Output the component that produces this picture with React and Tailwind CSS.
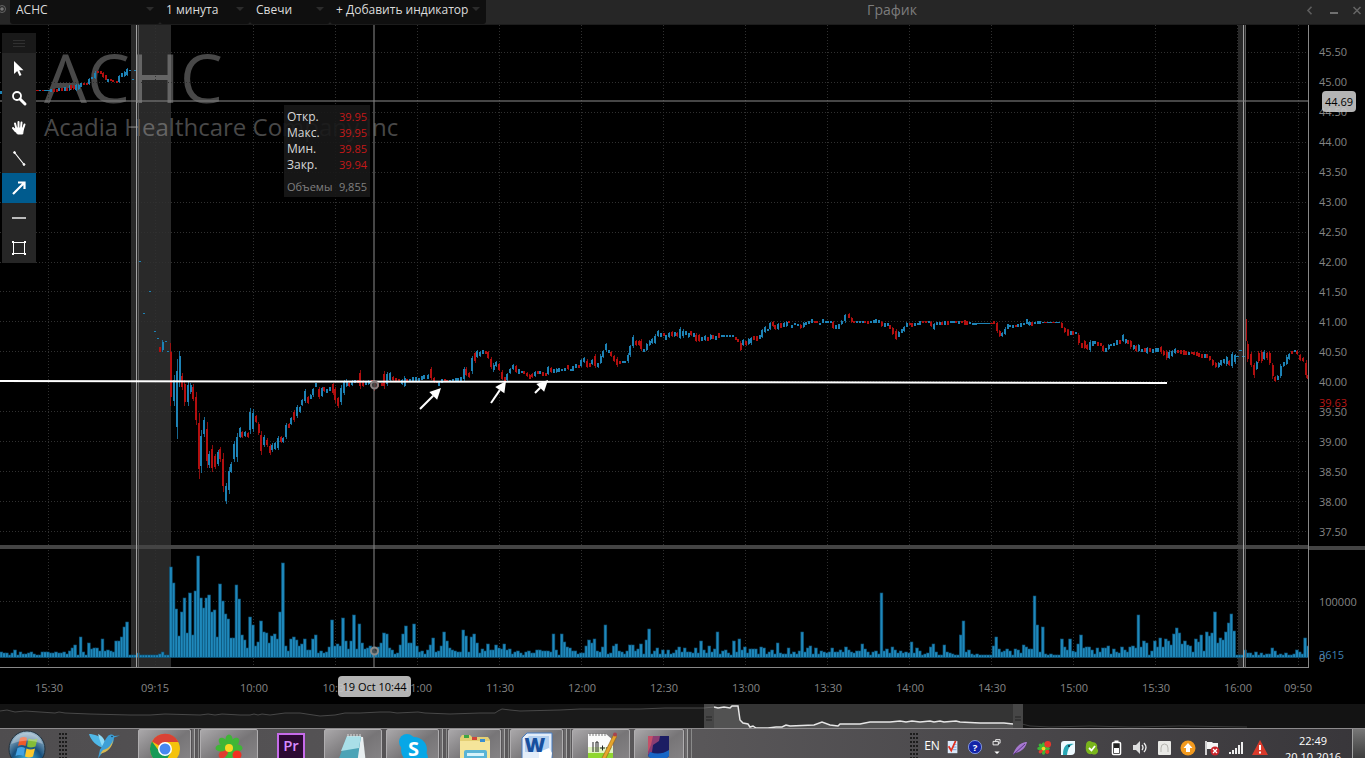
import { useState } from 'react';

const UP = '#1d82b5';
const DOWN = '#b30f0f';

// Each candle is "x high low" plus r (falling) or b (rising), in the units of its own session
const SESSIONS = [
    {
        id: 'premarket', x: 0, y: 0, k: 1 / 3,
        candles: '3 272 282 b;112 269 272 r;120 269 272 b;129 269 272 r;137 269 272 b;145 269 272 b;153 268 275 b;161 268 276 r;170 266 275 r;178 264 274 b;186 263 273 r;194 262 272 b;202 264 274 r;209 256 274 b;214 254 270 r;221 255 270 r;228 252 272 b;236 252 270 b;244 250 262 b;252 250 256 r;260 250 256 r;267 233 254 b;276 230 236 b;286 214 238 b;295 212 218 r;302 214 222 r;310 215 235 r;318 226 240 r;324 236 246 b;332 236 242 r;340 240 247 r;350 242 248 r;357 226 248 b;365 218 232 b;374 212 232 b;382 204 228 b;390 210 213 b;406 210 213 b;399 236 240 b;418 782 786 b;450 872 876 b'
    },
    {
        id: 'open', x: 120, y: 300, k: 1 / 3,
        candles: '72 38 42 b;105 92 96 b;114 113 117 b;138 123 127 b;144 153 156 b;119 141 155 r;128 120 155 b;152 128 318 r;163 225 318 b;172 177 416 b;179 152 260 b;186 219 270 r;194 240 318 r;204 245 318 b;212 250 282 b;219 253 303 r;229 276 375 r;237 339 537 r;243 390 518 b;253 350 410 b;261 365 503 r;267 453 503 b;277 435 516 r;286 462 507 r;295 450 498 b;301 441 485 r;309 458 576 r;319 549 612 b;327 500 582 b;333 487 520 b;342 423 487 b;351 399 485 b;360 380 415 b;367 392 413 r;376 392 410 b;385 395 415 r;391 325 403 b;400 327 397 b;408 345 370 r;416 365 405 r;424 393 465 r;433 405 440 b;441 415 440 r;451 432 465 r;457 430 455 b;466 425 450 b;475 408 450 b;484 408 430 r;490 412 430 b;498 369 417 b;507 369 385 r;513 350 375 b;522 330 365 r;531 316 355 b;540 317 340 b;547 298 318 b;555 267 310 b;564 288 311 r;572 282 298 b;579 264 290 b;588 248 262 b;597 260 297 r;607 260 292 b;613 260 275 r;622 268 278 b;631 262 273 b;639 248 284 r;645 260 308 r;654 290 323 r;663 255 315 b;672 240 285 b;680 238 262 b;688 245 262 r;697 240 258 b;705 240 250 b;713 240 250 r;721 210 266 r;730 240 260 r;738 244 254 b;746 240 255 b;755 240 250 r;764 240 272 r;775 250 262 r;787 248 258 r;793 213 266 r;802 216 258 b;811 216 245 b;820 228 243 r;829 235 243 r;838 238 247 r;846 236 255 b;854 228 262 b;862 237 246 r;871 236 246 b;879 231 243 b;887 232 243 b;896 233 244 b;905 228 240 b;911 225 238 b;924 222 238 b;934 201 240 r;943 232 250 r;951 245 250 r;957 244 258 b;965 238 248 b;974 238 245 r'
    },
    {
        id: 'morning', x: 430, y: 300, k: 1 / 3,
        candles: '44 237 246 r;52 240 245 r;60 240 246 b;69 238 246 b;77 234 246 b;85 234 244 b;93 232 242 b;102 200 244 b;109 202 228 r;118 215 234 r;127 167 222 b;135 155 188 r;142 150 175 b;151 152 170 b;159 150 162 b;168 152 162 r;175 153 178 r;183 170 208 r;191 190 215 b;199 183 200 b;208 190 212 r;216 210 240 r;224 230 242 r;231 220 242 b;240 205 222 b;249 193 210 b;258 194 220 r;266 208 222 b;275 213 219 b;283 212 221 r;291 215 232 r;299 222 238 r;307 218 235 r;315 212 230 b;323 214 222 r;331 213 223 b;339 216 228 r;347 220 228 r;354 198 226 b;363 200 218 r;371 208 218 b;380 203 220 b;388 205 217 b;397 206 213 b;405 203 213 b;415 194 210 r;422 206 213 b;430 198 212 b;438 192 204 b;446 195 203 r;454 177 200 b;463 172 190 b;471 178 204 r;479 188 202 r;487 176 194 b;495 162 203 r;504 188 204 b;512 162 192 b;520 150 175 b;529 128 155 b;537 150 158 b;544 153 172 r;552 165 185 r;561 172 200 r;569 183 192 r;578 183 188 b;586 182 188 b;594 160 188 b;601 134 170 b;610 105 143 b;618 120 138 r;627 120 138 r;634 116 153 r;642 148 155 b;650 128 153 b;659 120 138 b;667 113 132 b;676 103 132 b;685 90 110 b;693 98 110 b;701 98 108 r;709 106 120 b;717 97 115 b;726 94 112 r;734 95 110 b;742 95 112 r;750 82 118 b;759 88 113 b;768 94 104 b;776 98 114 b;784 92 108 r;792 98 112 b;799 100 126 r;808 103 126 r;817 112 123 b;825 106 122 b;833 110 124 r;842 103 120 b;850 106 118 r;858 108 120 b;867 100 114 r;875 104 112 b;883 105 112 b;892 106 112 b;900 106 112 b;908 106 112 b;917 110 120 r;925 117 126 r;932 123 153 r;940 118 138 b;948 122 138 r;956 114 135 b;964 110 134 b;973 107 120 r;981 108 122 r;989 104 118 b;997 86 115 b;1006 78 98 b;1013 86 94 b;1021 65 90 b;1029 63 82 r;1036 74 90 r;1045 70 90 b;1053 70 83 r;1062 66 82 b;1070 64 80 b;1078 64 70 r;1087 74 83 b;1096 70 76 b;1104 71 77 b;1112 72 87 r;1121 66 84 b;1129 66 74 b;1137 63 72 b;1146 57 68 b;1154 62 68 r;1162 63 68 r;1170 68 76 b;1178 57 70 b;1187 63 70 b;1195 62 70 b;1204 62 68 b;1210 62 88 r;1218 76 88 b;1226 72 86 b'
    },
    {
        id: 'afternoon', x: 840, y: 300, k: 0.3348,
        candles: '5 60 75 b;15 42 68 b;27 38 55 r;35 50 68 r;43 62 70 r;52 62 70 b;60 64 70 b;68 62 70 b;76 64 70 r;84 63 72 r;93 62 70 b;101 60 70 b;109 58 68 b;117 61 68 b;125 63 82 r;133 70 80 b;142 68 78 b;150 74 86 r;158 80 105 r;168 88 120 r;176 94 112 b;184 88 98 b;192 78 96 b;200 65 82 b;208 68 76 r;216 70 82 r;224 68 78 b;232 68 76 b;240 63 74 b;249 62 68 r;257 63 68 r;265 62 68 b;273 62 80 r;282 68 90 b;290 66 76 b;298 66 74 b;306 66 76 r;315 64 74 b;323 62 74 r;331 63 70 b;339 62 70 b;347 62 70 r;355 64 72 b;363 62 70 r;372 60 74 r;380 62 74 r;388 66 72 b;396 68 74 b;404 70 74 b;412 69 73 b;420 69 73 b;428 69 73 b;436 69 73 b;444 69 73 b;452 68 72 r;460 64 72 r;469 65 98 r;477 90 112 r;485 95 110 b;493 82 104 b;501 73 86 b;509 76 82 b;517 76 84 b;525 74 82 r;533 73 80 b;542 68 80 b;550 68 76 b;558 58 72 b;566 62 78 b;574 66 78 r;582 65 72 b;590 64 72 b;598 64 72 b;606 65 70 b;614 66 70 r;622 66 70 b;630 66 70 b;638 66 70 r;646 66 70 b;654 65 70 b;663 66 85 r;672 80 98 r;681 88 108 r;689 92 106 b;697 92 106 r;705 96 102 b;713 98 134 r;722 128 142 r;731 120 146 r;739 130 150 r;747 120 154 b;755 122 136 b;763 122 132 b;771 125 136 r;779 128 138 r;786 133 154 r;794 144 154 b;802 132 148 b;810 130 138 b;818 128 138 b;827 120 134 b;836 120 130 r;846 102 126 b;854 115 130 b;861 118 130 r;869 120 145 r;877 133 150 b;885 133 155 r;893 132 156 b;902 146 156 b;910 144 156 r;918 140 162 b;927 144 154 r;935 146 158 b;943 142 154 b;951 142 156 b;959 138 160 r;967 148 168 r;976 150 178 r;984 150 176 b;992 150 170 b;1002 144 162 b;1010 148 158 r;1018 150 162 r;1026 150 164 r;1034 153 163 r;1042 155 163 b;1050 156 162 r;1058 155 163 r;1065 156 166 r;1073 158 170 r;1081 160 172 r;1089 160 172 b;1097 160 174 r;1105 166 182 r;1114 175 196 r;1123 186 204 r;1131 185 202 b;1139 178 196 b;1147 175 190 b;1155 166 196 b;1163 180 198 r;1171 155 204 b;1180 160 190 b;1188 168 171 b;1196 150 153 b;1205 168 171 b;1212 42 135 r;1218 122 185 r;1228 156 200 r;1237 188 232 r;1245 182 210 b;1251 153 188 r;1259 150 188 r;1267 150 180 b;1276 155 178 r;1284 152 195 r;1292 188 235 r;1300 228 245 r;1308 224 240 b;1317 192 232 b;1326 184 200 b;1335 165 195 b;1342 158 180 b;1349 152 160 r;1358 150 156 b;1366 150 165 r;1375 160 182 r;1384 170 186 r;1392 180 232 r;1398 222 240 r'
    }
];

const VOLUME = [
    5, 4, 4, 2, 4, 7, 2, 5, 3, 3, 4, 5, 3, 2, 2, 5, 5, 5, 4, 4, 5, 4, 4, 5, 3, 6, 9, 12, 2, 20,
    5, 2, 14, 8, 9, 9, 6, 18, 6, 7, 6, 5, 16, 16, 20, 30, 35, 2, 2, 2, 4, 2, 2, 2, 2, 2, 2, 2, 3, 5,
    2, 2, 90, 74, 48, 21, 45, 59, 24, 64, 22, 66, 101, 59, 49, 59, 62, 45, 47, 20, 73, 56, 43, 38, 19, 19, 72, 58, 22, 17,
    9, 40, 32, 11, 15, 36, 25, 24, 14, 21, 23, 18, 45, 94, 11, 6, 18, 20, 17, 11, 13, 18, 7, 7, 18, 22, 4, 6, 4, 5,
    10, 37, 11, 13, 11, 39, 16, 8, 16, 42, 8, 33, 14, 8, 9, 11, 10, 6, 10, 14, 24, 23, 9, 7, 3, 4, 12, 23, 31, 14,
    14, 33, 11, 5, 6, 3, 7, 12, 19, 5, 6, 11, 25, 16, 9, 7, 6, 5, 5, 27, 21, 5, 20, 23, 14, 4, 8, 6, 13, 7,
    7, 12, 9, 8, 13, 7, 8, 3, 5, 6, 4, 2, 5, 6, 4, 4, 7, 7, 6, 6, 6, 5, 23, 7, 2, 23, 15, 10, 9, 6,
    6, 3, 4, 4, 11, 17, 14, 18, 6, 5, 10, 32, 3, 4, 11, 13, 6, 5, 3, 6, 12, 12, 6, 8, 13, 3, 17, 28, 3, 6,
    9, 3, 7, 3, 7, 3, 4, 7, 10, 5, 9, 5, 5, 4, 9, 4, 16, 7, 4, 11, 5, 8, 25, 3, 6, 7, 4, 2, 16, 5,
    18, 7, 10, 4, 8, 8, 8, 3, 10, 9, 3, 5, 7, 3, 14, 4, 3, 3, 9, 3, 5, 3, 6, 25, 5, 9, 11, 3, 9, 3,
    6, 5, 4, 5, 9, 5, 5, 7, 5, 10, 7, 5, 4, 6, 6, 13, 8, 5, 2, 5, 6, 3, 64, 6, 8, 4, 10, 7, 4, 6,
    4, 5, 4, 15, 4, 9, 6, 2, 3, 4, 10, 13, 5, 2, 2, 12, 5, 4, 3, 2, 2, 22, 36, 5, 7, 3, 2, 3, 2, 2,
    2, 2, 2, 11, 20, 8, 5, 6, 8, 6, 2, 8, 7, 4, 12, 10, 8, 8, 61, 32, 5, 30, 3, 2, 3, 2, 2, 2, 18, 10,
    7, 18, 6, 5, 13, 22, 9, 10, 10, 7, 3, 9, 5, 9, 9, 11, 3, 8, 5, 4, 10, 7, 5, 10, 11, 9, 42, 10, 16, 14,
    2, 6, 16, 10, 19, 10, 18, 16, 12, 23, 29, 24, 13, 16, 12, 11, 5, 18, 15, 22, 6, 25, 21, 24, 45, 14, 19, 17, 25, 34,
    43, 26, 2, 2, 2, 7, 4, 4, 2, 5, 2, 4, 2, 3, 3, 9, 6, 2, 3, 2, 4, 2, 2, 3, 7, 5, 3, 19, 11
];
const BAR_STEP = 2.7333;

const PRICES = ['45.50', '45.00', '44.50', '44.00', '43.50', '43.00', '42.50', '42.00', '41.50', '41.00', '40.50', '40.00', '39.50', '39.00', '38.50', '38.00', '37.50'];
const TIMES = ['15:30', '09:15', '10:00', '10:30', '11:00', '11:30', '12:00', '12:30', '13:00', '13:30', '14:00', '14:30', '15:00', '15:30', '16:00', '09:50'];
const GRID_X = [48.5, 155.5, 253.5, 335.5, 417.5, 499.5, 581.5, 663.5, 745.5, 827.5, 909.5, 991.5, 1073.5, 1155.5, 1237.5, 1298.5];

function Candles({ session }) {
    return (
        <g transform={`translate(${session.x} ${session.y}) scale(${session.k})`} shapeRendering="crispEdges">
            {session.candles.split(';').map((row) => {
                const [x, hi, lo, dir] = row.split(' ');
                const size = lo - hi;
                const inset = size > 14 ? size * 0.15 : 0;
                const half = size < 5 ? 4 : 3;
                return (
                    <g key={row} fill={dir === 'b' ? UP : DOWN}>
                        <rect x={x - 1.5} y={hi} width={3} height={size} opacity={0.8} />
                        <rect x={x - half} y={Number(hi) + inset} width={half * 2} height={size - inset * 2} />
                    </g>
                );
            })}
        </g>
    );
}

function Arrow({ x1, y1, x2, y2 }) {
    const a = Math.atan2(y2 - y1, x2 - x1);
    const bx = x2 - 11 * Math.cos(a);
    const by = y2 - 11 * Math.sin(a);
    const dx = 5.5 * Math.sin(a);
    const dy = -5.5 * Math.cos(a);
    return (
        <g fill="#fff" stroke="#fff">
            <line x1={x1} y1={y1} x2={bx} y2={by} strokeWidth={2} />
            <path d={`M${x2} ${y2}L${bx + dx} ${by + dy}L${bx - dx} ${by - dy}Z`} stroke="none" />
        </g>
    );
}

function ChartCanvas() {
    return (
        <svg className="relative block w-full h-full" viewBox="0 25 1308 642" preserveAspectRatio="none" role="img" aria-label="ACHC">
            {/* closed market hours */}
            <rect x="131" y="25" width="40" height="642" fill="#fff" opacity="0.16" />
            <rect x="1238" y="25" width="8" height="642" fill="#fff" opacity="0.16" />

            <g stroke="#303030" strokeWidth="1" strokeDasharray="1 2">
                {GRID_X.map((x) => <line key={x} x1={x} y1="25" x2={x} y2="667" />)}
                {PRICES.map((p, i) => {
                    const y = Math.round(52 + i * 29.93) + 0.5;
                    return <line key={p} x1="0" y1={y} x2="1308" y2={y} />;
                })}
                <line x1="0" y1="601.5" x2="1308" y2="601.5" />
            </g>

            {SESSIONS.map((s) => <Candles key={s.id} session={s} />)}

            <g fill="#1f88bb" stroke="#0d5378" strokeWidth="0.6">
                {VOLUME.map((h, i) => (
                    <rect key={i} x={i * BAR_STEP} y={657 - h} width={BAR_STEP} height={h + 0.5} />
                ))}
            </g>

            <rect x="0" y="545" width="1308" height="4" fill="#444" />
            <rect x="136" y="25" width="1" height="642" fill="#a3a3a3" />
            <rect x="138" y="25" width="1" height="642" fill="#5c5c5c" />
            <rect x="1243" y="25" width="1" height="642" fill="#a3a3a3" />
            <rect x="1245" y="25" width="1" height="642" fill="#5c5c5c" />

            {/* crosshair */}
            <rect x="0" y="100" width="1308" height="2" fill="#808080" opacity="0.55" />
            <rect x="373" y="25" width="2" height="642" fill="#808080" opacity="0.55" />

            <line x1="0" y1="381" x2="1167" y2="383" stroke="#fff" strokeWidth="2" />
            <Arrow x1={420} y1={409} x2={441} y2={388} />
            <Arrow x1={491} y1={403} x2={506} y2={381} />
            <Arrow x1={535} y1={393} x2={548} y2={380} />
            <circle cx="374.5" cy="385" r="3.5" fill="#444" fillOpacity="0.8" stroke="#8a8080" strokeWidth="2" />
            <circle cx="374.5" cy="651" r="3.5" fill="#444" fillOpacity="0.8" stroke="#8a8a8a" strokeWidth="2" />
        </svg>
    );
}

function MenuSelect({ label, value, className }) {
    return (
        <div className={`relative h-6 rounded-b-[3px] bg-[#0f0f0f] ${className}`}>
            <select aria-label={label} defaultValue={value} className="block w-full h-5 appearance-none bg-transparent pl-[6px] text-[12px] leading-5 font-medium text-[#dcdcdc] outline-none">
                <option value={value}>{value}</option>
            </select>
            <svg className="absolute right-[6px] top-[7px] w-2 h-1 pointer-events-none" viewBox="0 0 8 4"><path d="M0 0h8L4 4z" fill="#2c2c2c" /></svg>
        </div>
    );
}

function Header() {
    return (
        <header className="flex h-[25px] shrink-0 items-start bg-[#262626] border-b border-[#1c1c1c]">
            <svg className="w-[10px] h-5 shrink-0" viewBox="0 0 10 20">
                <circle cx="2" cy="9" r="3.5" fill="none" stroke="#666" />
                <circle cx="2" cy="9" r="1.8" fill="#777" />
            </svg>
            <div className="flex">
                <MenuSelect label="Тикер" value="ACHC" className="w-[150px]" />
                <MenuSelect label="Интервал" value="1 минута" className="w-[90px]" />
                <MenuSelect label="Тип" value="Свечи" className="w-[80px]" />
                <MenuSelect label="Индикатор" value="+ Добавить индикатор" className="w-[156px]" />
            </div>
            <h1 className="flex-1 text-center text-[14px] leading-5 text-[#7d7d7d]">График</h1>
            <div className="flex w-[67px] h-5 items-center justify-between pl-[8px] pr-[4px]">
                <button aria-label="Назад"><svg className="w-2 h-[9px]" viewBox="0 0 8 9" fill="none" stroke="#5e5e5e" strokeWidth="1.6"><path d="M5.5 .8L2 4.5l3.500 3.700" /></svg></button>
                <button aria-label="Свернуть"><svg className="w-2 h-[9px]" viewBox="0 0 8 9"><rect y="6" width="8" height="2" fill="#707070" /></svg></button>
                <button aria-label="Закрыть"><svg className="w-2 h-[9px]" viewBox="0 0 8 9" fill="none" stroke="#666" strokeWidth="1.500"><path d="M.5 1l7 7M7.500 1l-7 7" /></svg></button>
            </div>
        </header>
    );
}

const TOOLS = [
    { id: 'Курсор', icon: <path d="M4 2v13l3.200-3 2.300 5 2-1-2.300-4.700h4.300z" fill="#fff" /> },
    { id: 'Лупа', icon: <g fill="none" stroke="#fff"><circle cx="7" cy="7" r="4" strokeWidth="1.800" /><path d="M10 10l5 5" strokeWidth="3" strokeLinecap="round" /></g> },
    { id: 'Рука', icon: <g stroke="#fff" strokeWidth="2" strokeLinecap="round"><path d="M6.500 10L5 4.500M8.500 9V3M11 9l.5-5.500M13 10l1.500-4.500M5.500 12L3 9" fill="none" /><path d="M5.500 9h8l-.8 6H7.500L5 12z" fill="#fff" strokeWidth="1" /></g> },
    { id: 'Отрезок', icon: <g stroke="#fff" fill="#fff"><path d="M4.500 3.500l9.500 12" strokeWidth="1.200" /><circle cx="4.500" cy="3.500" r=".9" /><circle cx="14" cy="15.500" r=".9" /></g> },
    { id: 'Стрелка', icon: <path d="M3 15L14 4M8 3.500h6.500V10" fill="none" stroke="#fff" strokeWidth="2.200" /> },
    { id: 'Горизонталь', icon: <path d="M2 9h14" stroke="#bbb" strokeWidth="2" /> },
    { id: 'Прямоугольник', icon: <g fill="#fff"><path d="M3.500 3.500h11v11h-11z" fill="none" stroke="#fff" /><path d="M2 2h2v2H2zM14 2h2v2h-2zM2 14h2v2H2zM14 14h2v2h-2z" /></g> }
];

function Toolbar() {
    const [active, setActive] = useState('Стрелка');

    return (
        <div className="absolute left-[2px] top-2 w-[34px] bg-[#262626]">
            <div className="flex h-5 flex-col items-center justify-center gap-[2px] bg-[#191919]">
                <span className="w-3 h-px bg-[#303030]" />
                <span className="w-3 h-px bg-[#303030]" />
                <span className="w-3 h-px bg-[#303030]" />
            </div>
            {TOOLS.map((tool) => (
                <button
                    key={tool.id}
                    aria-label={tool.id}
                    onClick={() => setActive(tool.id)}
                    className={`flex w-full h-[30px] items-center justify-center ${active === tool.id ? 'bg-[#005b8e]' : ''}`}
                >
                    <svg className="w-[18px] h-[18px]" viewBox="0 0 18 18">{tool.icon}</svg>
                </button>
            ))}
        </div>
    );
}

const QUOTE = [['Откр.', '39.95'], ['Макс.', '39.95'], ['Мин.', '39.85'], ['Закр.', '39.94']];

function QuoteBox() {
    return (
        <table className="absolute left-[284px] top-20 w-[86px] bg-[#181818]/90 text-[12px] leading-4">
            <tbody>
                <tr className="h-1"><td colSpan="2" /></tr>
                {QUOTE.map(([name, value]) => (
                    <tr key={name}>
                        <th scope="row" className="p-0 pl-[3px] text-left font-normal text-[#d8d8d8]">{name}</th>
                        <td className="p-0 pr-[3px] text-right text-[11px] font-medium text-[#c41818]">{value}</td>
                    </tr>
                ))}
                <tr className="text-[#808080]">
                    <th scope="row" className="p-0 pl-[3px] pt-[6px] pb-[2px] text-left text-[11px] font-normal">Объемы</th>
                    <td className="p-0 pr-[3px] pt-[6px] pb-[2px] text-right text-[11px]">9,855</td>
                </tr>
            </tbody>
        </table>
    );
}

function PriceAxis() {
    return (
        <div className="relative flex w-[57px] shrink-0 flex-col border-l border-[#888] text-[11px] leading-4 text-[#858585]">
            <div className="flex flex-1 flex-col justify-between pt-[19px] pb-[6px] pl-[10px]">
                {PRICES.map((p) => <span key={p}>{p}</span>)}
            </div>
            <div className="h-1 bg-[#444]" />
            <div className="flex h-[118px] flex-col justify-between pt-[44px] pb-[2px] pl-[10px]">
                <span>100000</span>
                <span>0</span>
            </div>
            <span className="absolute left-[13px] top-[66px] h-[21px] rounded-sm bg-[#c8c8c8]/90 px-[3px] leading-[22px] text-black">44.69</span>
            <span className="absolute left-[10px] top-[370px] text-[#b81616]">39.63</span>
            <span className="absolute left-[10px] bottom-[5px] text-[#3f82b5]">3615</span>
        </div>
    );
}

function TimeAxis() {
    return (
        <div className="relative grid h-[36px] shrink-0 grid-cols-[98fr_114fr_84fr_81fr_repeat(11,82fr)_38fr_48fr] items-center pt-1 text-center text-[11px] leading-4 text-[#858585]">
            {TIMES.map((t, i) => <span key={i}>{t}</span>)}
            <span className="absolute left-[338px] top-2 h-[21px] w-[73px] rounded-sm bg-[#c8c8c8]/90 leading-[21px] text-black">19 Oct 10:44</span>
        </div>
    );
}

const NAV_LEFT = '0,7 7,6 15,8 25,7 55,9 59,8 65,9 90,10 130,11 150,11 165,10 200,11 208,10 215,11 222,10 240,11 250,11 254,10 258,11 262,10 270,11 285,9 300,9 320,12 335,11 345,9 360,9 380,8 390,8 397,9 418,8 425,9 450,10 480,9 495,9 498,7 502,5 510,6 520,7 560,6 580,5 640,5 665,4 680,4 704,4';
const NAV_VIEW = '714,3 718,4 724,3 730,4 732,2 738,2 740,16 743,19 748,20 750,23 753,22 756,24 768,24 776,23 782,23 786,21 790,22 814,21 822,18 830,21 838,22 840,20 860,20 870,18 890,18 900,17 906,18 912,17 920,18 930,17 934,18 940,17 944,18 956,17 960,18 980,19 1004,19 1013,20';

function Navigator() {
    return (
        <svg className="block w-full h-6 shrink-0" viewBox="0 0 1365 24" preserveAspectRatio="none" aria-hidden="true">
            <rect width="1365" height="24" fill="#131313" />
            <polygon points={`0,24 ${NAV_LEFT} 704,24`} fill="#1a1a1a" />
            <polyline points={NAV_LEFT} fill="none" stroke="#484848" />
            <rect x="704" width="319" height="24" fill="#343434" />
            <polygon points={`714,24 ${NAV_VIEW} 1013,24`} fill="#525252" />
            <polyline points={NAV_VIEW} fill="none" stroke="#e6e6e6" strokeWidth="1.500" />
            <polyline points="704,4 714,3" stroke="#777" />
            <polyline points="1013,20 1022,20 1030,22 1050,23 1090,22 1130,23 1180,22 1247,23" fill="none" stroke="#3c3c3c" />
            <rect x="704" width="10" height="24" fill="#555" opacity="0.55" />
            <rect x="1013" width="10" height="24" fill="#555" opacity="0.55" />
            <path d="M706 13h6M706 16h6M1015 13h6M1015 16h6" stroke="#222" />
        </svg>
    );
}

function Hummingbird() {
    return (
        <g>
            <path d="M1 3c5 0 12 2 16 8l-2 6C9 15 3 10 1 3z" fill="#4fb8e8" />
            <path d="M10 3c4 2 7 5 7 10l-3 2C12 10 11 7 10 3z" fill="#8fdcf8" />
            <path d="M20 5c2-2 5-2 6 0l6-.5-6 2c0 7-5 11-10 13l-6 8 2-9c3-3 4-9 8-13.500z" fill="#3d9fd6" />
            <path d="M25 8c-1 6-5 10-10 11l-3 4c8-2 13-7 13-15z" fill="#d7b850" />
            <circle cx="24" cy="5.500" r=".7" fill="#123" />
        </g>
    );
}

function Flower() {
    return (
        <g>
            {[0, 45, 90, 135, 180, 225, 270, 315].map((a) => (
                <ellipse key={a} cx="16" cy="8" rx="3.600" ry="5.500" fill={a === 225 ? '#e03c30' : '#3fb636'} transform={`rotate(${a} 16 16)`} />
            ))}
            <circle cx="16" cy="16" r="4" fill="#f8d822" />
            <circle cx="24" cy="23" r="4.500" fill="#f22f22" />
        </g>
    );
}

const APPS = [
    { name: 'Hummingbird', box: 'w-[66px]', icon: <Hummingbird /> },
    {
        name: 'Chrome', box: 'w-[53px]', glass: true, stack: true,
        icon: (
            <g>
                <circle cx="16" cy="17" r="15" fill="#f4c20d" />
                <path d="M16 17L3 9.500A15 15 0 0 1 29.500 10H16z" fill="#d94235" />
                <path d="M3 9.500A15 15 0 0 0 15 32l7-12-6-3-6 2z" fill="#179a56" />
                <circle cx="16" cy="17" r="7" fill="#fff" />
                <circle cx="16" cy="17" r="5.500" fill="#4688f1" />
            </g>
        )
    },
    { name: 'ICQ', box: 'w-[58px]', glass: true, icon: <Flower /> },
    {
        name: 'Premiere', box: 'w-[64px]',
        icon: <g><rect x="2" y="2" width="28" height="28" fill="#c66bea" /><rect x="4" y="4" width="24" height="24" fill="#2c0a33" /><text x="16" y="20" textAnchor="middle" fontSize="15" fontWeight="600" fill="#d68aff">Pr</text></g>
    },
    {
        name: 'Notepad', box: 'w-[58px] mr-[3px]', glass: true,
        icon: <g><path d="M12 4l14 1 3 27H6z" fill="#e8eef0" /><path d="M10 4h14l-4 28H0z" fill="#4ba3b6" /><path d="M10 4h14l-2 12-18 3z" fill="#a9dfe8" /><path d="M11 2v3M14 2v3M17 2v3M20 2v3M23 2v3" stroke="#ddd" /></g>
    },
    {
        name: 'Skype', box: 'w-[53px]', glass: true, stack: true,
        icon: <g fill="#07a7e6"><circle cx="17" cy="18" r="13" /><circle cx="10" cy="10" r="8" /><circle cx="23" cy="26" r="8" /><text x="16.500" y="24" textAnchor="middle" fontSize="20" fontWeight="700" fill="#fff">S</text></g>
    },
    {
        name: 'Explorer', box: 'w-[53px]', glass: true, stack: true,
        icon: <g><path d="M1 6l2-3h8l2 2h16l2 3v24H1z" fill="#e4cf74" /><path d="M1 9h30v23H1z" fill="#f5e59a" /><path d="M5 3h5v3H5z" fill="#3fa544" /><path d="M13 5h5v3h-5z" fill="#d0463a" /><path d="M21 7h5v3h-5z" fill="#3b8ed0" /><rect x="5" y="18" width="23" height="14" rx="2" fill="#5ab4d6" /><path d="M8 21h17v3H8z" fill="#d6f2fa" /></g>
    },
    {
        name: 'Word', box: 'w-[53px]', glass: true, stack: true,
        icon: <g><path d="M6 1h25v31H1V6z" fill="#e3edf9" stroke="#477cc2" /><path d="M8 4h20v16H4V8z" fill="#b4d0f0" /><path d="M18 20l10-4 3 5-2 11H18z" fill="#fff" /><text x="14" y="20" textAnchor="middle" fontSize="20" fontWeight="800" fill="#174f9e">W</text></g>
    },
    {
        name: 'Notepad++', box: 'w-[58px] mr-[3px]', glass: true,
        icon: <g><path d="M3 2h18l7 6v24H3z" fill="#fafafa" /><path d="M3 21h25v11H3z" fill="#8ed62f" /><path d="M3 15h25v6H3z" fill="#dff3c0" /><path d="M5 1v3M8 1v3M11 1v3M14 1v3M17 1v3M20 1v3" stroke="#777" /><path d="M8 10v10M11 20V10h2v10M15 16h5M17.500 13.500v5M21 16h5M23.500 13.500v5" fill="none" stroke="#222" /><path d="M29 2l3 2-12 24-4 3 1-5z" fill="#e6a52c" stroke="#8d5c10" strokeWidth=".6" /><circle cx="30" cy="2.500" r="2" fill="#a8434d" /></g>
    },
    {
        name: 'Terminal', box: 'w-[50px]', glass: true, stack: true,
        icon: <g><path d="M5 4h21v20q-10 10-21 0z" fill="#1c1d63" /><path d="M5 4h12l-1 5-6 4-1 7-4 3z" fill="#8a3d72" /><path d="M5 4h5l-2 9-3 7z" fill="#c44f68" /><path d="M7 20q10 4 19-2v6q-10 10-21 0z" fill="#1766c6" /></g>
    }
];

function Grip() {
    return (
        <svg className="w-2 h-10 shrink-0" viewBox="0 0 8 40">
            {[0, 1, 2, 3, 4, 5, 6].map((r) => (
                <path key={r} d={`M0 ${5 + r * 4}h2M3 ${5 + r * 4}h2M6 ${5 + r * 4}h2`} stroke="#1c1c1c" strokeWidth="2" />
            ))}
        </svg>
    );
}

function Stack() {
    return (
        <span className="flex h-10 gap-px pl-px">
            <span className="w-[3px] border-r border-[#a8a8a8] bg-[#6b696b]" />
            <span className="w-[3px] border-r border-[#8a8a8a] bg-[#5a585a]" />
        </span>
    );
}

const TRAY = [
    { name: 'Заметки', narrow: true, icon: <g><path d="M2 1h11v14H2z" fill="#dbe9fa" /><path d="M8 5h4M8 8h4M8 11h4" stroke="#6c98d6" /><path d="M3 7l3 5L11 1" fill="none" stroke="#e03020" strokeWidth="2" /></g> },
    { name: 'Справка', narrow: true, icon: <g><circle cx="8" cy="8" r="7.500" fill="#1324a8" stroke="#8fa3e8" /><text x="8" y="12" textAnchor="middle" fontSize="11" fontWeight="700" fill="#fff">?</text></g> },
    { name: 'Окна', narrow: true, icon: <g fill="none" stroke="#fff"><path d="M6.500 2.500V.5h5v4h-2M3.500 2.500h6v4h-6z" transform="translate(0 -1)" /><path d="M5 13h6l-3 3z" fill="#fff" stroke="none" /></g> },
    { name: 'Перо', icon: <g><path d="M1 16C3 8 9 3 15 3c-1 5-5 10-12 11z" fill="#a678cf" /><path d="M1 16L13 5" stroke="#5d348a" /></g> },
    { name: 'ICQ', icon: <g transform="translate(0 2) scale(.47)"><Flower /><circle cx="25" cy="7" r="7" fill="#e6382c" /></g> },
    { name: 'Hummingbird', icon: <g><path d="M1 5q0-3 3-3h11v10q0 4-4 4H1z" fill="#eefaff" /><path d="M3 16C3 6 7 4 14 5c-4 1-6 4-7 11z" fill="#28a7b5" /><circle cx="9" cy="7" r="1" fill="#123" /></g> },
    { name: 'Skype', icon: <g><path d="M2 6c0-4 4-5 6-3 4 0 6 3 5 6 3 4-1 8-5 6-5 1-7-3-6-9z" fill="#79b51c" /><path d="M5 9l2.500 2.500L11 7" fill="none" stroke="#fff" strokeWidth="1.800" /></g> },
    { name: 'Батарея', icon: <g><rect x="4.500" y="3.500" width="8" height="12" rx="1" fill="#222" stroke="#fff" strokeWidth="1.500" /><path d="M6.500 1.500h4v2h-4zM6 9h5v5H6z" fill="#fff" /></g> },
    { name: 'Громкость', icon: <g fill="none" stroke="#eee"><path d="M1 6h3l4-4v13l-4-4H1z" fill="#ddd" stroke="none" /><path d="M10 6q2 2.500 0 5M12 4q4 4.500 0 9" strokeWidth="1.300" /></g> },
    { name: 'Диск', icon: <g><rect x="2" y="2" width="13" height="14" rx="1" fill="#e9e9e6" /><path d="M5 13V9q0-4 3.500-4T12 9v4" fill="none" stroke="#b5b5b0" /></g> },
    { name: 'Обновление', icon: <g><circle cx="8" cy="9" r="7.500" fill="#f29a1f" /><path d="M8 4l4.500 5H10v4H6V9H3.500z" fill="#fff" /></g> },
    { name: 'Центр поддержки', icon: <g><path d="M2 2v14" stroke="#fff" strokeWidth="1.500" /><path d="M3 3h5l1 1h5v7H8l-1-1H3z" fill="#f4f4f4" /><circle cx="11" cy="12" r="4.500" fill="#c9252b" /><path d="M9 10l4 4M13 10l-4 4" stroke="#fff" strokeWidth="1.300" /></g> },
    { name: 'Сеть', icon: <path d="M1 13h2v2H1zM4 11h2v4H4zM7 9h2v6H7zM10 6h2v9h-2zM13 3h2v12h-2z" fill="#eee" /> },
    { name: 'Предупреждение', icon: <g><path d="M8 1l8 15H0z" fill="#d93a2b" /><path d="M8 6v5M8 12.500v2" stroke="#fff" strokeWidth="2" /></g> }
];

function Taskbar() {
    return (
        <footer className="flex h-[30px] shrink-0 items-start overflow-hidden border-t border-[#8d8b8d] bg-gradient-to-r from-[#4f4d4f] via-[#5a585a] to-[#38363a]">
            <button aria-label="Пуск" className="w-[54px] h-10 shrink-0">
                <svg className="block w-[54px] h-10" viewBox="0 0 54 40">
                    <defs>
                        <radialGradient id="orb" cx="50%" cy="85%" r="85%">
                            <stop offset="0" stopColor="#3fc3ee" />
                            <stop offset=".5" stopColor="#174f7c" />
                            <stop offset="1" stopColor="#a9c3d3" />
                        </radialGradient>
                    </defs>
                    <circle cx="27" cy="20" r="18" fill="url(#orb)" stroke="#20303c" />
                    <path d="M20 9q4-2 7 0l-1.500 8q-4-2-7.500 0z" fill="#ee5a2a" />
                    <path d="M28.500 9.500q5 2 9 0l-2 8q-5 2-8.500 0z" fill="#84bd38" />
                    <path d="M17.500 19q4-2 7.500 0l-1.500 8q-4-2-8 0z" fill="#42a2e4" />
                    <path d="M26.500 19.500q4 2 8.500 0l-2 8q-4 2-8 0z" fill="#fbc82c" />
                    <path d="M11 15a17 17 0 0 1 32 0q-16-7-32 0z" fill="#fff" opacity=".3" />
                </svg>
            </button>
            <div className="flex w-[17px] shrink-0 justify-center"><Grip /></div>
            <nav className="flex gap-px">
                {APPS.map((app) => (
                    <div key={app.name} className="flex">
                        <button
                            aria-label={app.name}
                            className={`flex h-10 justify-center rounded-t-[2px] ${app.box} ${app.glass ? 'border border-[#b0aeb0] bg-gradient-to-br from-[#aaa8aa] via-[#777577] to-[#8a888a]' : ''}`}
                        >
                            <svg className="mt-[2px] w-8 h-8 shrink-0" viewBox="0 0 32 32">{app.icon}</svg>
                        </button>
                        {app.stack && <Stack />}
                    </div>
                ))}
            </nav>
            <div className="ml-auto flex h-10 shrink-0 items-start">
                <Grip />
                <span className="w-7 pt-[7px] text-center text-[12px] leading-5 text-white">EN</span>
                <div className="flex gap-2 pt-[10px]">
                    {TRAY.map((item) => (
                        <svg key={item.name} className={`h-[17px] ${item.narrow ? 'w-[14px]' : 'w-4'}`} viewBox="0 0 16 17" role="img" aria-label={item.name}>{item.icon}</svg>
                    ))}
                </div>
                <div className="w-[84px] pt-1 pl-[6px] text-center text-[11px] leading-4 text-white">
                    <div>22:49</div>
                    <div>20.10.2016</div>
                </div>
                <button aria-label="Показать рабочий стол" className="w-[13px] h-10 border-l border-[#a0a0a0] bg-gradient-to-b from-[#777] to-[#2a2a2a]" />
            </div>
        </footer>
    );
}

export default function App() {
    return (
        <div className="flex h-screen flex-col overflow-hidden bg-black font-['Open_Sans','Noto_Sans',sans-serif]">
            <Header />
            <main className="flex min-h-0 flex-1 flex-col">
                <div className="flex min-h-0 flex-1">
                    <div className="relative min-w-0 flex-1 border-b border-[#888]">
                        <div className="absolute left-[44px] top-[18px] text-[#484848]">
                            <div className="text-[68px] leading-[68px]">ACHC</div>
                            <div className="text-[24px] leading-8">Acadia Healthcare Company Inc</div>
                        </div>
                        <ChartCanvas />
                        <QuoteBox />
                        <Toolbar />
                    </div>
                    <PriceAxis />
                </div>
                <TimeAxis />
            </main>
            <Navigator />
            <Taskbar />
        </div>
    );
}
